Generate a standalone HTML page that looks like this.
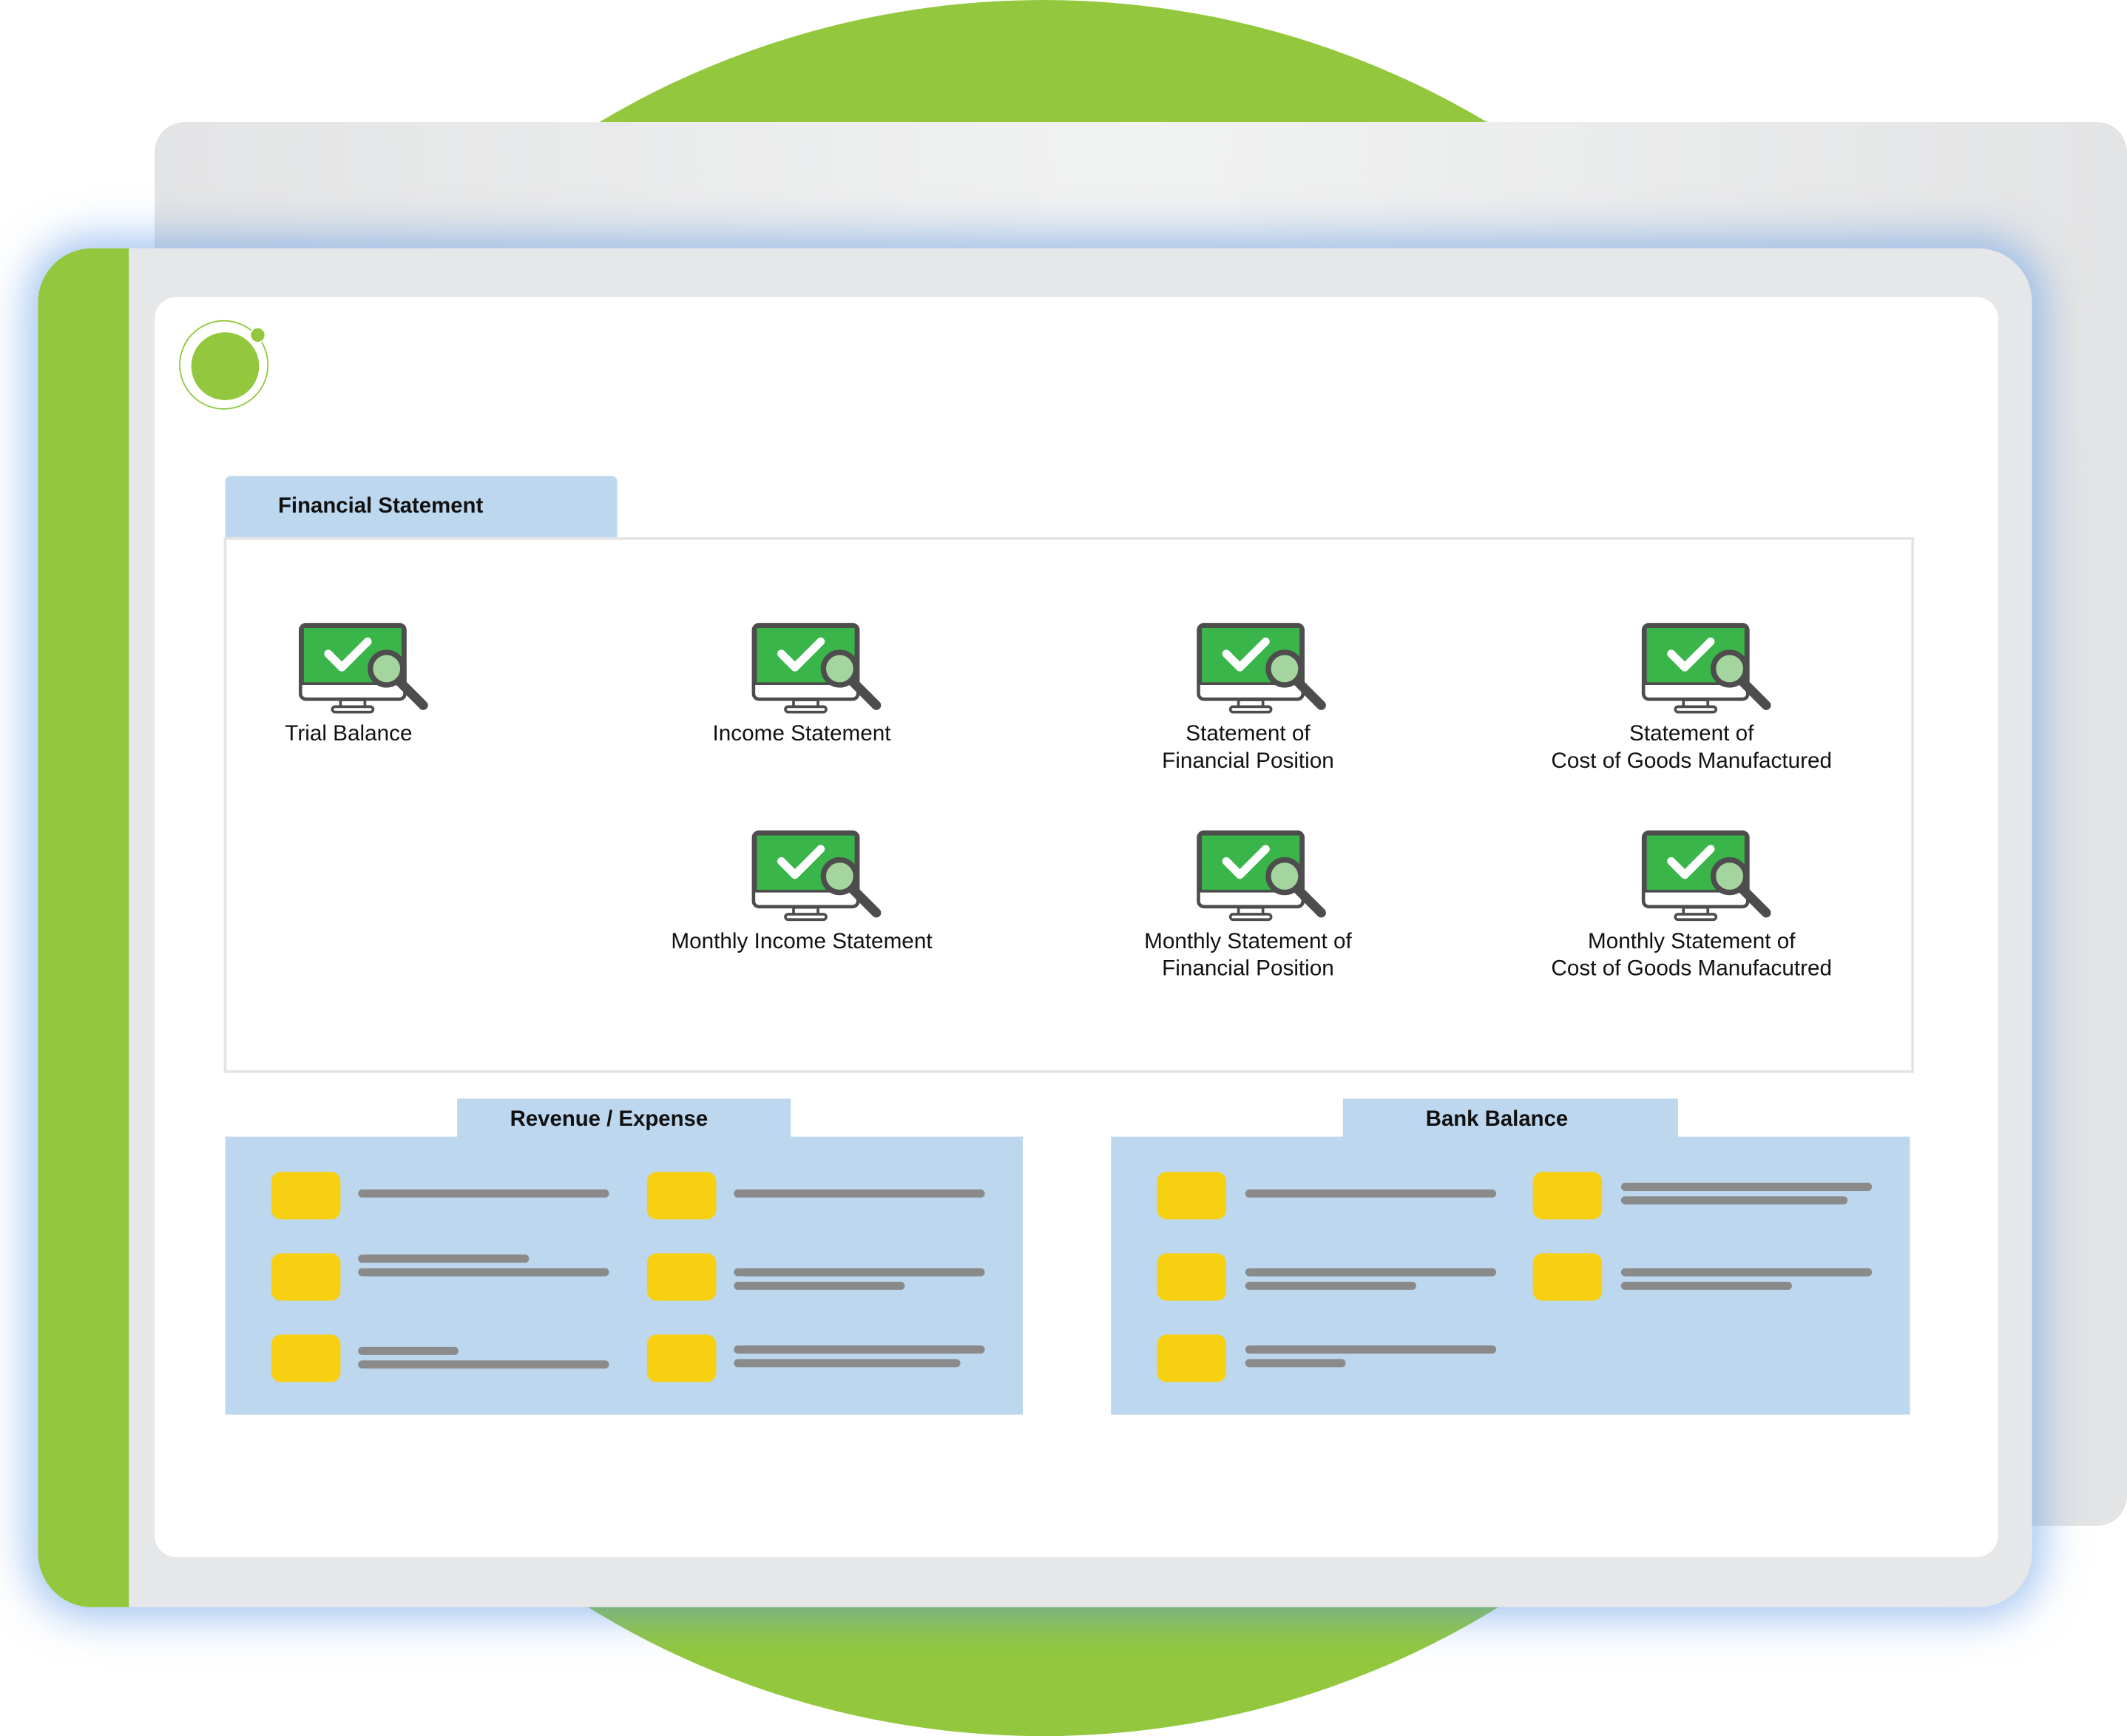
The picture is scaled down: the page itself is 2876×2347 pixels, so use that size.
<!DOCTYPE html>
<html><head><meta charset="utf-8"><style>
html,body{margin:0;padding:0;background:#fff;width:2876px;height:2338px;overflow:hidden}
#w{position:absolute;left:0;top:0;width:1568px;height:1275px;transform:scale(1.8342,1.8337);transform-origin:0 0;font-family:"Liberation Sans",sans-serif}
.a{position:absolute}
.lbl{position:absolute;font-size:16.2px;color:#111;text-align:center;line-height:20px;width:300px}
.y{position:absolute;width:51px;height:35px;background:#f8d012;border-radius:7px}
.b{position:absolute;height:6px;background:#8a8a8a;border-radius:3px}
.tab{position:absolute;background:#bdd7ef;font-weight:bold;font-size:16px;color:#111}
</style></head><body><div id="w">
<div class="a" style="left:129px;top:0px;width:1280px;height:1280px;border-radius:50%;background:#93c83e"></div>
<div class="a" style="left:114px;top:90px;width:1454px;height:1035px;border-radius:22px;background:radial-gradient(ellipse at 50% 0%,#f1f2f2,#e3e4e5 70%)"></div>
<div class="a" style="left:28px;top:183px;width:1470px;height:1002px;border-radius:40px;background:#e6e7e8;box-shadow:0 0 30px 8px rgba(90,150,230,0.55);overflow:hidden">
  <div class="a" style="left:0;top:0;width:67px;height:1002px;background:#93c83e"></div>
</div>
<div class="a" style="left:114px;top:219px;width:1359px;height:929px;border-radius:16px;background:#fff"></div>
<div class="a" style="left:132px;top:236px;width:64px;height:64px;border:1.5px solid #93c83e;border-radius:50%"></div>
<div class="a" style="left:141px;top:245px;width:50px;height:50px;background:#93c83e;border-radius:50%"></div>
<div class="a" style="left:184px;top:241px;width:10px;height:10px;background:#93c83e;border-radius:50%;border:1.5px solid #fff"></div>

<div class="tab" style="left:166px;top:351px;width:289px;height:46px;border-radius:4px 4px 0 0;line-height:46px;padding-left:39px;box-sizing:border-box">Financial Statement</div>
<div class="a" style="left:165px;top:396px;width:1242px;height:391px;border:2px solid #e4e4e4"></div>

<svg width="0" height="0" style="position:absolute"><defs>
<g id="mon">
<rect x="1.5" y="1.5" width="77" height="55" rx="4" fill="#fff" stroke="#4d4d4d" stroke-width="2.5"/>
<path d="M1.5 6a4 4 0 0 1 4-4.5h69a4 4 0 0 1 4 4.5v40h-77z" fill="#4d4d4d"/>
<rect x="4" y="4" width="72" height="40" fill="#39b54a"/>
<rect x="31" y="57" width="18" height="6" fill="#fff" stroke="#4d4d4d" stroke-width="2"/>
<rect x="25" y="62" width="30" height="4" rx="2" fill="#fff" stroke="#4d4d4d" stroke-width="2"/>
<path d="M22 23l10 10 19-19" fill="none" stroke="#fff" stroke-width="6" stroke-linecap="round" stroke-linejoin="round"/>
<path d="M74 43l18 18" stroke="#4d4d4d" stroke-width="7" stroke-linecap="round"/>
<circle cx="65" cy="34" r="12" fill="#a5d59f" stroke="#4d4d4d" stroke-width="4"/>
</g></defs></svg>

<svg class="a" style="left:220px;top:459px" width="96" height="68" viewBox="0 0 96 68"><use href="#mon"/></svg>
<svg class="a" style="left:554px;top:459px" width="96" height="68" viewBox="0 0 96 68"><use href="#mon"/></svg>
<svg class="a" style="left:882px;top:459px" width="96" height="68" viewBox="0 0 96 68"><use href="#mon"/></svg>
<svg class="a" style="left:1210px;top:459px" width="96" height="68" viewBox="0 0 96 68"><use href="#mon"/></svg>
<svg class="a" style="left:554px;top:612px" width="96" height="68" viewBox="0 0 96 68"><use href="#mon"/></svg>
<svg class="a" style="left:882px;top:612px" width="96" height="68" viewBox="0 0 96 68"><use href="#mon"/></svg>
<svg class="a" style="left:1210px;top:612px" width="96" height="68" viewBox="0 0 96 68"><use href="#mon"/></svg>

<div class="lbl" style="left:107px;top:531px">Trial Balance</div>
<div class="lbl" style="left:441px;top:531px">Income Statement</div>
<div class="lbl" style="left:770px;top:531px">Statement of<br>Financial Position</div>
<div class="lbl" style="left:1097px;top:531px">Statement of<br>Cost of Goods Manufactured</div>
<div class="lbl" style="left:441px;top:684px">Monthly Income Statement</div>
<div class="lbl" style="left:770px;top:684px">Monthly Statement of<br>Financial Position</div>
<div class="lbl" style="left:1097px;top:684px">Monthly Statement of<br>Cost of Goods Manufacutred</div>

<div class="tab" style="left:337px;top:810px;width:246px;height:29px;line-height:31px;padding-left:39px;box-sizing:border-box">Revenue / Expense</div>
<div class="a" style="left:166px;top:838px;width:588px;height:205px;background:#bdd7ef"></div>
<div class="tab" style="left:990px;top:810px;width:247px;height:29px;line-height:31px;padding-left:61px;box-sizing:border-box">Bank Balance</div>
<div class="a" style="left:819px;top:838px;width:589px;height:205px;background:#bdd7ef"></div>

<div class="y" style="left:200px;top:864px"></div><div class="b" style="left:264px;top:877px;width:185px"></div>
<div class="y" style="left:477px;top:864px"></div><div class="b" style="left:541px;top:877px;width:185px"></div>
<div class="y" style="left:200px;top:924px"></div><div class="b" style="left:264px;top:925px;width:126px"></div><div class="b" style="left:264px;top:935px;width:185px"></div>
<div class="y" style="left:477px;top:924px"></div><div class="b" style="left:541px;top:935px;width:185px"></div><div class="b" style="left:541px;top:945px;width:126px"></div>
<div class="y" style="left:200px;top:984px"></div><div class="b" style="left:264px;top:993px;width:74px"></div><div class="b" style="left:264px;top:1003px;width:185px"></div>
<div class="y" style="left:477px;top:984px"></div><div class="b" style="left:541px;top:992px;width:185px"></div><div class="b" style="left:541px;top:1002px;width:167px"></div>

<div class="y" style="left:853px;top:864px"></div><div class="b" style="left:918px;top:877px;width:185px"></div>
<div class="y" style="left:1130px;top:864px"></div><div class="b" style="left:1195px;top:872px;width:185px"></div><div class="b" style="left:1195px;top:882px;width:167px"></div>
<div class="y" style="left:853px;top:924px"></div><div class="b" style="left:918px;top:935px;width:185px"></div><div class="b" style="left:918px;top:945px;width:126px"></div>
<div class="y" style="left:1130px;top:924px"></div><div class="b" style="left:1195px;top:935px;width:185px"></div><div class="b" style="left:1195px;top:945px;width:126px"></div>
<div class="y" style="left:853px;top:984px"></div><div class="b" style="left:918px;top:992px;width:185px"></div><div class="b" style="left:918px;top:1002px;width:74px"></div>
</div></body></html>
